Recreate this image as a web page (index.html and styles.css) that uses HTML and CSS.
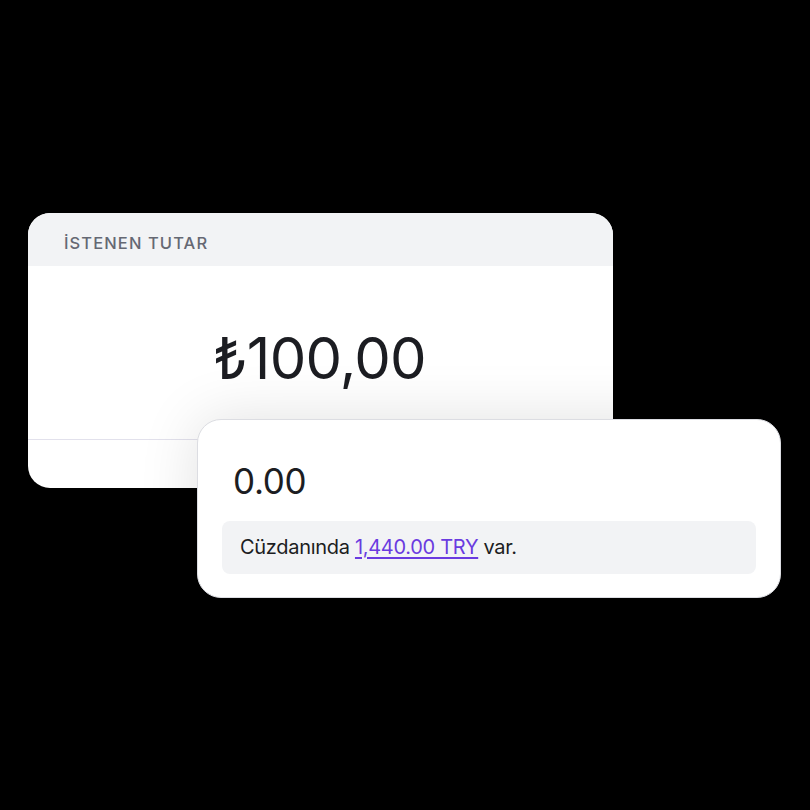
FILE: index.html
```html
<!DOCTYPE html>
<html lang="tr">
<head>
  <meta charset="UTF-8">
  <title>İstenen Tutar</title>
  <meta name="viewport" content="width=device-width, initial-scale=1">
  <link rel="stylesheet" href="styles.css">
</head>
<body>
  <div class="stage">
    <div class="request-card">
      <div class="request-head">İSTENEN TUTAR</div>
      <div class="request-amount">₺100,00</div>
      <div class="request-foot"></div>
    </div>
    <div class="pay-card">
      <div class="pay-value">0.00</div>
      <div class="wallet-note">Cüzdanında <a href="#">1,440.00 TRY</a> var.</div>
    </div>
  </div>
</body>
</html>
```

FILE: styles.css
```css
html, body {
  background: #000;
}
body {
  font-family: Inter, "Noto Sans", sans-serif;
  margin: 0;
  padding: 0;
  width: 810px;
  height: 810px;
  overflow: hidden;
}
.stage {
  padding: 213px 0 0 28px;
}
.request-card {
  width: 585px;
  height: 275px;
  background: #fff;
  border-radius: 22px;
  overflow: hidden;
  display: flex;
  flex-direction: column;
}
.request-head {
  height: 53px;
  box-sizing: border-box;
  padding: 20px 0 0 36px;
  background: #f2f3f5;
  color: #656873;
  font-size: 16.5px;
  font-weight: 500;
  line-height: 20px;
  letter-spacing: 1.1px;
}
.request-amount {
  height: 173px;
  display: flex;
  align-items: center;
  justify-content: center;
  padding: 10px 2px 0 0;
  box-sizing: border-box;
  color: #1c1d22;
  font-size: 58px;
  letter-spacing: -0.8px;
}
.request-foot {
  flex: 1;
  border-top: 1px solid #e2e1ec;
}
.pay-card {
  position: relative;
  width: 584px;
  height: 179px;
  box-sizing: border-box;
  margin: -69px 0 0 169px;
  padding: 39px 24px 24px;
  background: #fff;
  border: 1px solid #dcdde2;
  border-radius: 24px;
  box-shadow: 0 0 60px rgba(0, 0, 0, 0.12);
}
.pay-value {
  padding-left: 11px;
  color: #1c1d22;
  font-size: 35px;
  line-height: 44px;
  letter-spacing: -0.3px;
}
.wallet-note {
  margin-top: 18px;
  height: 53px;
  box-sizing: border-box;
  padding: 14px 18px 0;
  background: #f2f3f5;
  border-radius: 8px;
  color: #1c1d22;
  font-size: 20px;
  line-height: 24px;
  letter-spacing: -0.3px;
}
.wallet-note a {
  color: #6a3be0;
  text-decoration: underline;
  text-underline-offset: 3px;
}
```
